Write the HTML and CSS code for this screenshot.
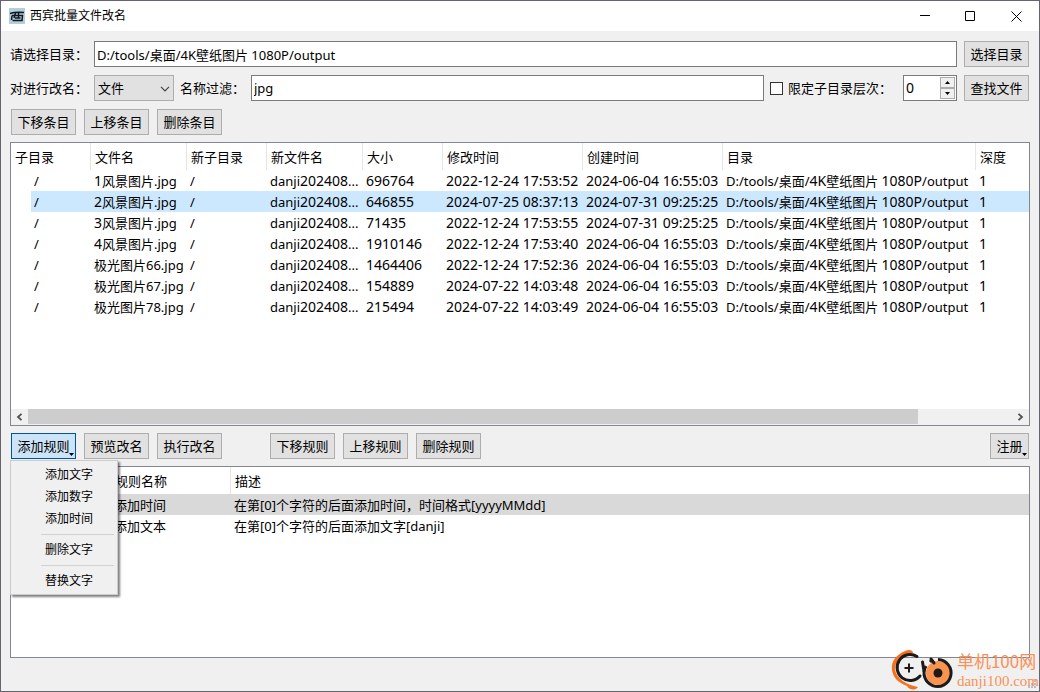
FILE: index.html
```html
<!DOCTYPE html>
<html lang="zh-CN">
<head>
<meta charset="utf-8">
<title>西宾批量文件改名</title>
<link rel="stylesheet" href="styles.css">
</head>
<body>
<div class="window">
  <header class="titlebar">
    <svg class="app-icon" width="16" height="16" viewBox="0 0 16 16" aria-hidden="true">
      <rect width="16" height="16" fill="#b4cfdb"/>
      <path d="M1 5.500C5 4.200 10 4 15 4.500M3 7.500L2.500 12M3 7.500H13.500L13 12.500H3.500M6.500 5L5 10M9.500 5V10H11.500M6 10H11" fill="none" stroke="#101820" stroke-width="1.500"/>
    </svg>
    <h1 class="title">西宾批量文件改名</h1>
    <div class="window-buttons">
      <button class="window-button" aria-label="最小化"><svg width="11" height="11" viewBox="0 0 11 11"><path d="M1 4.500H11" stroke="#000"/></svg></button>
      <button class="window-button" aria-label="最大化"><svg width="11" height="11" viewBox="0 0 11 11"><path d="M.5 .5H9.500V9.500H.5Z" fill="none" stroke="#000"/></svg></button>
      <button class="window-button" aria-label="关闭"><svg width="11" height="11" viewBox="0 0 11 11"><path d="M.5 .5L10.500 10.500M10.500 .5L.5 10.500" stroke="#000"/></svg></button>
    </div>
  </header>

  <main class="content">
    <div class="form-row">
      <label class="lead-label" for="folder">请选择目录：</label>
      <input class="text-box" id="folder" type="text" value="D:/tools/桌面/4K壁纸图片 1080P/output">
      <button class="button">选择目录</button>
    </div>
    <div class="form-row">
      <label class="lead-label" for="kind">对进行改名：</label>
      <div class="select-wrap">
        <select class="select" id="kind"><option>文件</option></select>
        <svg class="chevron" width="10" height="6" viewBox="0 0 10 6"><path d="M1 .8L5 4.800L9 .8" fill="none" stroke="#444" stroke-width="1.200"/></svg>
      </div>
      <label class="filter-label" for="filter">名称过滤：</label>
      <input class="text-box" id="filter" type="text" value="jpg">
      <label class="check-label"><input class="check" type="checkbox">限定子目录层次：</label>
      <div class="spin">
        <input class="spin-input" type="number" value="0" aria-label="子目录层次">
        <div class="spin-buttons">
          <button class="spin-button" aria-label="增加"><svg width="5" height="3" viewBox="0 0 5 3"><path d="M0 3L2.500 0L5 3Z"/></svg></button>
          <button class="spin-button" aria-label="减少"><svg width="5" height="3" viewBox="0 0 5 3"><path d="M0 0L2.500 3L5 0Z"/></svg></button>
        </div>
      </div>
      <button class="button">查找文件</button>
    </div>
    <div class="button-row">
      <button class="button">下移条目</button>
      <button class="button">上移条目</button>
      <button class="button">删除条目</button>
    </div>

    <section class="panel files-panel">
      <div class="panel-body">
        <table class="grid">
          <colgroup><col class="w80"><col class="w96"><col class="w80"><col class="w96"><col class="w80"><col class="w140"><col class="w140"><col class="w253"><col></colgroup>
          <thead>
            <tr><th>子目录</th><th>文件名</th><th>新子目录</th><th>新文件名</th><th>大小</th><th>修改时间</th><th>创建时间</th><th>目录</th><th>深度</th></tr>
          </thead>
          <tbody class="tree">
            <tr><td>/</td><td><span class="num">1</span>风景图片.jpg</td><td>/</td><td>danji<span class="num">202408</span>...</td><td class="num">696764</td><td class="num">2022-12-24 17:53:52</td><td class="num">2024-06-04 16:55:03</td><td>D:/tools/桌面/<span class="num">4K</span>壁纸图片 <span class="num">1080P</span>/output</td><td class="num">1</td></tr>
            <tr class="selected"><td>/</td><td><span class="num">2</span>风景图片.jpg</td><td>/</td><td>danji<span class="num">202408</span>...</td><td class="num">646855</td><td class="num">2024-07-25 08:37:13</td><td class="num">2024-07-31 09:25:25</td><td>D:/tools/桌面/<span class="num">4K</span>壁纸图片 <span class="num">1080P</span>/output</td><td class="num">1</td></tr>
            <tr><td>/</td><td><span class="num">3</span>风景图片.jpg</td><td>/</td><td>danji<span class="num">202408</span>...</td><td class="num">71435</td><td class="num">2022-12-24 17:53:55</td><td class="num">2024-07-31 09:25:25</td><td>D:/tools/桌面/<span class="num">4K</span>壁纸图片 <span class="num">1080P</span>/output</td><td class="num">1</td></tr>
            <tr><td>/</td><td><span class="num">4</span>风景图片.jpg</td><td>/</td><td>danji<span class="num">202408</span>...</td><td class="num">1910146</td><td class="num">2022-12-24 17:53:40</td><td class="num">2024-06-04 16:55:03</td><td>D:/tools/桌面/<span class="num">4K</span>壁纸图片 <span class="num">1080P</span>/output</td><td class="num">1</td></tr>
            <tr><td>/</td><td>极光图片66.jpg</td><td>/</td><td>danji<span class="num">202408</span>...</td><td class="num">1464406</td><td class="num">2022-12-24 17:52:36</td><td class="num">2024-06-04 16:55:03</td><td>D:/tools/桌面/<span class="num">4K</span>壁纸图片 <span class="num">1080P</span>/output</td><td class="num">1</td></tr>
            <tr><td>/</td><td>极光图片67.jpg</td><td>/</td><td>danji<span class="num">202408</span>...</td><td class="num">154889</td><td class="num">2024-07-22 14:03:48</td><td class="num">2024-06-04 16:55:03</td><td>D:/tools/桌面/<span class="num">4K</span>壁纸图片 <span class="num">1080P</span>/output</td><td class="num">1</td></tr>
            <tr><td>/</td><td>极光图片78.jpg</td><td>/</td><td>danji<span class="num">202408</span>...</td><td class="num">215494</td><td class="num">2024-07-22 14:03:49</td><td class="num">2024-06-04 16:55:03</td><td>D:/tools/桌面/<span class="num">4K</span>壁纸图片 <span class="num">1080P</span>/output</td><td class="num">1</td></tr>
          </tbody>
        </table>
      </div>
      <div class="scrollbar">
        <button class="scroll-button" aria-label="向左滚动"><svg width="7" height="8" viewBox="0 0 7 8"><path d="M5.500 .8L2 4L5.500 7.200" fill="none" stroke="#505050" stroke-width="1.8"/></svg></button>
        <div class="scroll-track"><div class="scroll-thumb"></div></div>
        <button class="scroll-button" aria-label="向右滚动"><svg width="7" height="8" viewBox="0 0 7 8"><path d="M1.500 .8L5 4L1.500 7.200" fill="none" stroke="#505050" stroke-width="1.8"/></svg></button>
      </div>
    </section>

    <div class="button-row">
      <div class="menu-anchor">
        <button class="button active has-menu" aria-expanded="true">添加规则<svg class="menu-arrow" width="5" height="3" viewBox="0 0 5 3"><path d="M0 0H5L2.500 3Z"/></svg></button>
        <div class="menu" role="menu">
          <button class="menu-item" role="menuitem">添加文字</button>
          <button class="menu-item" role="menuitem">添加数字</button>
          <button class="menu-item" role="menuitem">添加时间</button>
          <hr class="menu-line">
          <button class="menu-item" role="menuitem">删除文字</button>
          <hr class="menu-line">
          <button class="menu-item" role="menuitem">替换文字</button>
        </div>
      </div>
      <button class="button">预览改名</button>
      <button class="button">执行改名</button>
      <div class="button-group">
        <button class="button">下移规则</button>
        <button class="button">上移规则</button>
        <button class="button">删除规则</button>
      </div>
      <button class="button small has-menu register">注册<svg class="menu-arrow" width="5" height="3" viewBox="0 0 5 3"><path d="M0 0H5L2.500 3Z"/></svg></button>
    </div>

    <section class="panel rules-panel">
      <div class="panel-body">
        <table class="grid">
          <colgroup><col class="w100"><col class="w120"><col></colgroup>
          <thead><tr><th></th><th>规则名称</th><th>描述</th></tr></thead>
          <tbody>
            <tr class="current"><td></td><td>添加时间</td><td>在第[0]个字符的后面添加时间，时间格式[yyyyMMdd]</td></tr>
            <tr><td></td><td>添加文本</td><td>在第[0]个字符的后面添加文字[danji]</td></tr>
          </tbody>
        </table>
      </div>
    </section>
  </main>

  <footer class="statusbar">
    <svg class="grip" width="8" height="8" viewBox="0 0 8 8" fill="#bdbdbd"><path d="M6 0h2v2h-2zM3 3h2v2h-2zM6 3h2v2h-2zM0 6h2v2h-2zM3 6h2v2h-2zM6 6h2v2h-2z"/></svg>
  </footer>

  <div class="watermark">
    <svg width="64" height="43" viewBox="0 0 64 43" fill="none" aria-hidden="true">
      <path d="M22 5C22 2 18 1 14 3C5 7 0 13 1 22C2 30 8 35 16 38C18 42 24 43 27 39C16 37 5 31 4 21C4 13 11 6 22 5Z" fill="#f9701c"/>
      <path d="M26 8.500A13 13 0 1 0 29 28" stroke="#1d1a1a" stroke-width="3" stroke-linecap="round"/>
      <path d="M18 15.500V24.500M13.500 20H22.500" stroke="#1d1a1a" stroke-width="2"/>
      <circle cx="47" cy="25" r="12" fill="#fb9350"/>
      <path d="M47 11.500A13.500 13.500 0 1 1 35 18M39 14L41 12" stroke="#1d1a1a" stroke-width="3"/>
      <circle cx="47" cy="25" r="4.500" fill="#1d1a1a"/>
      <path d="M31.500 14L33 23M40 11L43 15" stroke="#1d1a1a" stroke-width="3" stroke-linecap="round"/>
    </svg>
    <div class="watermark-text">
      <span class="watermark-name">单机100网</span>
      <span class="watermark-site">danji100.com</span>
    </div>
  </div>
</div>
</body>
</html>
```

FILE: styles.css
```css
* {
  box-sizing: border-box;
}

body {
  margin: 0;
  background: #f0f0f0;
  color: #000;
  font: 13px/20px "Noto Sans", "Noto Sans CJK SC", sans-serif;
}

button,
input,
select {
  margin: 0;
  color: inherit;
  font: inherit;
}

.window {
  position: relative;
  display: flex;
  flex-direction: column;
  min-height: 100vh;
  border: 1px solid #66646e;
}

/* Title bar */
.titlebar {
  display: flex;
  align-items: center;
  height: 30px;
  padding-left: 8px;
  background: #fff;
}

.title {
  flex: 1;
  margin: 0 0 0 5px;
  font-size: 12px;
  font-weight: 400;
}

.window-buttons {
  display: flex;
}

.window-button {
  display: flex;
  align-items: center;
  justify-content: center;
  width: 46px;
  height: 30px;
  padding: 0;
  border: 0;
  background: none;
}

/* Form */
.content {
  display: flex;
  flex: 1;
  flex-direction: column;
  gap: 8px;
  padding: 10px 10px 0;
}

.form-row {
  display: flex;
  align-items: center;
  gap: 7px;
}

.lead-label {
  flex: none;
  width: 77px;
  margin-left: -1px;
  white-space: nowrap;
}

.filter-label {
  flex: none;
  width: 64px;
  margin-left: -1px;
  white-space: nowrap;
}

.text-box {
  flex: 1;
  min-width: 0;
  height: 26px;
  padding: 0 2px;
  border: 1px solid #7a7a7a;
  background: #fff;
}

.button {
  flex: none;
  min-width: 65px;
  height: 26px;
  padding: 0 5px;
  border: 1px solid #adadad;
  background: #e1e1e1;
  white-space: nowrap;
}

.button.small {
  min-width: 39px;
}

.button.active {
  border-color: #005499;
  background: #cce4f7;
}

.select-wrap {
  position: relative;
  display: flex;
  flex: none;
  width: 80px;
}

.select {
  width: 100%;
  height: 26px;
  padding: 0 3px;
  border: 1px solid #adadad;
  border-radius: 0;
  background: #e1e1e1;
  appearance: none;
}

.chevron {
  position: absolute;
  top: 11px;
  right: 4px;
  pointer-events: none;
}

.check-label {
  display: flex;
  flex: none;
  align-items: center;
  gap: 5px;
  width: 126px;
  margin-left: -1px;
  white-space: nowrap;
}

.check {
  width: 13px;
  height: 13px;
  border: 1px solid #333;
  background: #fff;
  appearance: none;
}

.spin {
  display: flex;
  width: 54px;
  height: 26px;
  padding: 1px;
  border: 1px solid #7a7a7a;
  background: #fff;
}

.spin-input {
  flex: 1;
  width: 0;
  padding: 0 1px;
  border: 0;
  font-size: 14px;
  appearance: textfield;
}

.spin-input::-webkit-inner-spin-button {
  appearance: none;
}

.spin-buttons {
  display: flex;
  flex-direction: column;
  width: 15px;
}

.spin-button {
  display: flex;
  flex: 1;
  align-items: center;
  justify-content: center;
  padding: 0;
  border: 1px solid #acacac;
  background: #f0f0f0;
}

.button-row {
  display: flex;
  gap: 8px;
}

.button-group {
  display: flex;
  gap: 8px;
  margin-left: 40px;
}

.register {
  margin-left: auto;
}

/* Lists */
.panel {
  display: flex;
  flex-direction: column;
  margin: -1px -1px 0;
  border: 1px solid #828790;
  background: #fff;
}

.files-panel {
  flex: 1 0 284px;
  margin-bottom: -1px;
}

.rules-panel {
  flex: 1 0 192px;
}

.panel-body {
  flex: 1;
}

.grid {
  width: 100%;
  border-collapse: separate;
  border-spacing: 0;
  table-layout: fixed;
}

.grid th,
.grid td {
  overflow: hidden;
  padding: 0 3px;
  text-align: left;
  text-overflow: ellipsis;
  white-space: nowrap;
}

.grid th {
  height: 27px;
  padding: 0 4px;
  border-right: 1px solid #e5e5e5;
  font-weight: 400;
}

.grid th:last-child {
  border-right: 0;
}

.grid td {
  height: 21px;
}

.grid .num {
  font-size: 14px;
}

.tree td:first-child {
  padding-left: 23px;
}

.selected td {
  background: #cce8ff;
}

.selected td:first-child {
  background: linear-gradient(to right, #fff 20px, #cce8ff 20px);
}

.current td {
  background: #d9d9d9;
}

.w80 { width: 80px; }
.w96 { width: 96px; }
.w100 { width: 100px; }
.w120 { width: 120px; }
.w140 { width: 140px; }
.w253 { width: 253px; }

.scrollbar {
  display: flex;
  height: 16px;
  background: #f0f0f0;
}

.scroll-button {
  display: flex;
  align-items: center;
  justify-content: center;
  width: 17px;
  padding: 0;
  border: 0;
  background: none;
}

.scroll-track {
  flex: 1;
}

.scroll-thumb {
  width: 90.4%;
  height: 15px;
  background: #cdcdcd;
}

/* Drop-down menu */
.menu-anchor {
  position: relative;
}

.has-menu {
  position: relative;
}

.menu-arrow {
  position: absolute;
  right: 1px;
  bottom: 2px;
}

.menu {
  position: absolute;
  z-index: 2;
  top: 27px;
  left: -1px;
  width: 108px;
  padding: 3px 3px 2px;
  border: 1px solid #ccc;
  background: #f0f0f0;
  box-shadow: 2px 2px 2px rgba(0, 0, 0, 0.5);
}

.menu-item {
  display: block;
  width: 100%;
  height: 22px;
  padding: 0 0 0 31px;
  border: 0;
  background: none;
  font-size: 12px;
  text-align: left;
}

.menu-line {
  height: 1px;
  margin: 4px 0 4px 27px;
  border: 0;
  background: #d0d0d0;
}

/* Status bar */
.statusbar {
  display: flex;
  align-items: flex-end;
  justify-content: flex-end;
  height: 33px;
  padding: 3px;
}

.watermark {
  position: absolute;
  right: 0;
  bottom: 0;
  display: flex;
  align-items: flex-end;
  gap: 2px;
  color: #fb9058;
  pointer-events: none;
}

.watermark-text {
  display: flex;
  flex-direction: column;
  white-space: nowrap;
}

.watermark-name {
  font: 17px/20px "Noto Sans CJK SC", sans-serif;
}

.watermark-site {
  font: 15px/20px "Liberation Serif", serif;
}
```
